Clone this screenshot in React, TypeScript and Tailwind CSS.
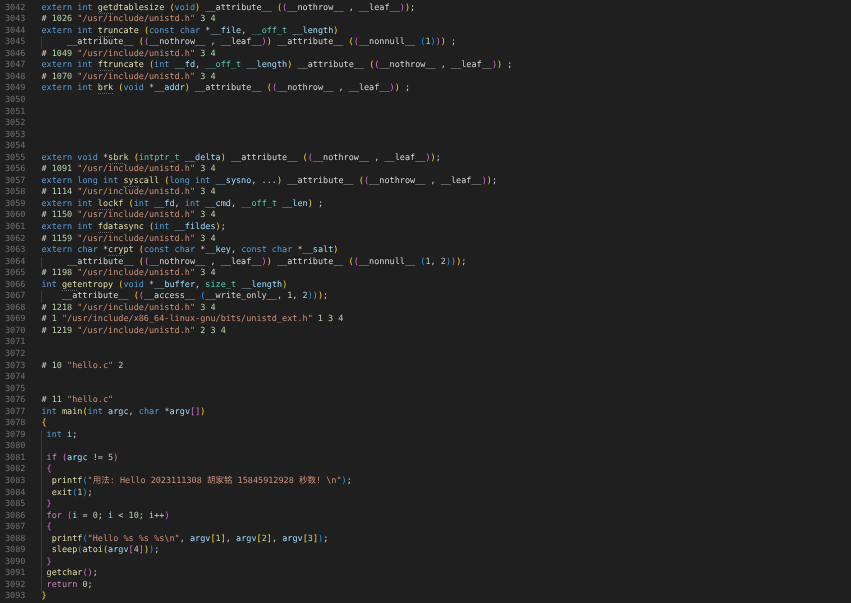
type Token = [string, string];

const mk = (cls: string) => (t: string): Token => [cls, t];
const k = mk('text-[#569cd6]');
const c = mk('text-[#c586c0]');
const f = mk('text-[#dcdcaa]');
const fd = mk('text-[#dcdcaa] border-b border-dotted border-[#666666]');
const v = mk('text-[#9cdcfe]');
const t = mk('text-[#4ec9b0]');
const s = mk('text-[#ce9178]');
const n = mk('text-[#b5cea8]');
const p = mk('text-[#d4d4d4]');
const b1 = mk('text-[#ffd700]');
const b2 = mk('text-[#da70d6]');
const b3 = mk('text-[#179fff]');

const attrs = (): Token[] => [p('__attribute__ '), b1('('), b2('('), p('__nothrow__ , __leaf__'), b2(')'), b1(')')];
const loc = (num: string, file = 'unistd.h', tail = ' 3 4'): Token[] => [
  p('# '),
  n(num),
  s(` "/usr/include/${file}"`),
  n(tail),
];

// line number start is 3042, guide marks the lines with an indent rule
const lines: { code: Token[]; guide?: boolean }[] = [
  { code: [k('extern int '), fd('get'), f('dtablesize '), b1('('), k('void'), b1(')'), p(' '), ...attrs(), p(';')] },
  { code: loc('1026') },
  { code: [k('extern int '), fd('tru'), f('ncate '), b1('('), k('const char '), p('*'), v('__file'), p(', '), t('__off_t'), v(' __length'), b1(')')] },
  {
    guide: true,
    code: [p('     '), ...attrs(), p(' __attribute__ '), b1('('), b2('('), p('__nonnull__ '), b3('('), n('1'), b3(')'), b2(')'), b1(')'), p(' ;')],
  },
  { code: loc('1049') },
  { code: [k('extern int '), fd('ftr'), f('uncate '), b1('('), k('int '), v('__fd'), p(', '), t('__off_t'), v(' __length'), b1(')'), p(' '), ...attrs(), p(' ;')] },
  { code: loc('1070') },
  { code: [k('extern int '), fd('brk'), f(' '), b1('('), k('void '), p('*'), v('__addr'), b1(')'), p(' '), ...attrs(), p(' ;')] },
  { code: [] },
  { code: [] },
  { code: [] },
  { code: [] },
  { code: [] },
  { code: [k('extern void '), p('*'), fd('sbr'), f('k '), b1('('), t('intptr_t'), v(' __delta'), b1(')'), p(' '), ...attrs(), p(';')] },
  { code: loc('1091') },
  { code: [k('extern long int '), fd('sys'), f('call '), b1('('), k('long int '), v('__sysno'), p(', ...'), b1(')'), p(' '), ...attrs(), p(';')] },
  { code: loc('1114') },
  { code: [k('extern int '), fd('loc'), f('kf '), b1('('), k('int '), v('__fd'), p(', '), k('int '), v('__cmd'), p(', '), t('__off_t'), v(' __len'), b1(')'), p(' ;')] },
  { code: loc('1150') },
  { code: [k('extern int '), fd('fda'), f('tasync '), b1('('), k('int '), v('__fildes'), b1(')'), p(';')] },
  { code: loc('1159') },
  { code: [k('extern char '), p('*'), fd('cry'), f('pt '), b1('('), k('const char '), p('*'), v('__key'), p(', '), k('const char '), p('*'), v('__salt'), b1(')')] },
  {
    guide: true,
    code: [p('     '), ...attrs(), p(' __attribute__ '), b1('('), b2('('), p('__nonnull__ '), b3('('), n('1'), p(', '), n('2'), b3(')'), b2(')'), b1(')'), p(';')],
  },
  { code: loc('1198') },
  { code: [k('int '), fd('get'), f('entropy '), b1('('), k('void '), p('*'), v('__buffer'), p(', '), t('size_t'), v(' __length'), b1(')')] },
  {
    guide: true,
    code: [p('    __attribute__ '), b1('('), b2('('), p('__access__ '), b3('('), p('__write_only__, '), n('1'), p(', '), n('2'), b3(')'), b2(')'), b1(')'), p(';')],
  },
  { code: loc('1218') },
  { code: loc('1', 'x86_64-linux-gnu/bits/unistd_ext.h', ' 1 3 4') },
  { code: loc('1219', 'unistd.h', ' 2 3 4') },
  { code: [] },
  { code: [] },
  { code: [p('# '), n('10'), s(' "hello.c"'), n(' 2')] },
  { code: [] },
  { code: [] },
  { code: [p('# '), n('11'), s(' "hello.c"')] },
  { code: [k('int '), f('main'), b1('('), k('int '), v('argc'), p(', '), k('char '), p('*'), v('argv'), b2('[]'), b1(')')] },
  { code: [b1('{')] },
  { guide: true, code: [k(' int '), v('i'), p(';')] },
  { guide: true, code: [] },
  { guide: true, code: [c(' if '), b2('('), v('argc'), p(' != '), n('5'), b2(')')] },
  { guide: true, code: [b2(' {')] },
  { guide: true, code: [f('  printf'), b3('('), s('"用法: Hello 2023111308 胡家铭 15845912928 秒数! \\n"'), b3(')'), p(';')] },
  { guide: true, code: [f('  exit'), b3('('), n('1'), b3(')'), p(';')] },
  { guide: true, code: [b2(' }')] },
  { guide: true, code: [c(' for '), b2('('), v('i'), p(' = '), n('0'), p('; '), v('i'), p(' < '), n('10'), p('; '), v('i'), p('++'), b2(')')] },
  { guide: true, code: [b2(' {')] },
  {
    guide: true,
    code: [f('  printf'), b3('('), s('"Hello %s %s %s\\n"'), p(', '), v('argv'), b1('['), n('1'), b1(']'), p(', '), v('argv'), b1('['), n('2'), b1(']'), p(', '), v('argv'), b1('['), n('3'), b1(']'), b3(')'), p(';')],
  },
  { guide: true, code: [f('  sleep'), b3('('), f('atoi'), b1('('), v('argv'), b2('['), n('4'), b2(']'), b1(')'), b3(')'), p(';')] },
  { guide: true, code: [b2(' }')] },
  { guide: true, code: [f(' getchar'), b2('()'), p(';')] },
  { guide: true, code: [c(' return '), n('0'), p(';')] },
  { code: [b1('}')] },
];

export default function App() {
  return (
    <div className="h-[603px] overflow-hidden bg-[#1f1f1f] pt-[2.6px] font-['DejaVu_Sans_Mono','Noto_Sans_CJK_SC',monospace] text-[8.5px] leading-[11.55px] blur-[0.45px] [text-rendering:geometricPrecision]">
      {lines.map((line, i) => (
        <div key={i} className="flex h-[11.55px] whitespace-pre">
          <div className="w-[40.5px] shrink-0 pl-[5px] text-[#707070]">{3042 + i}</div>
          <div className={`grow border-l ${line.guide ? 'border-[#3a3a3a]' : 'border-transparent'}`}>
            {line.code.map(([cls, text], j) => (
              <span key={j} className={cls}>
                {text}
              </span>
            ))}
          </div>
        </div>
      ))}
    </div>
  );
}
